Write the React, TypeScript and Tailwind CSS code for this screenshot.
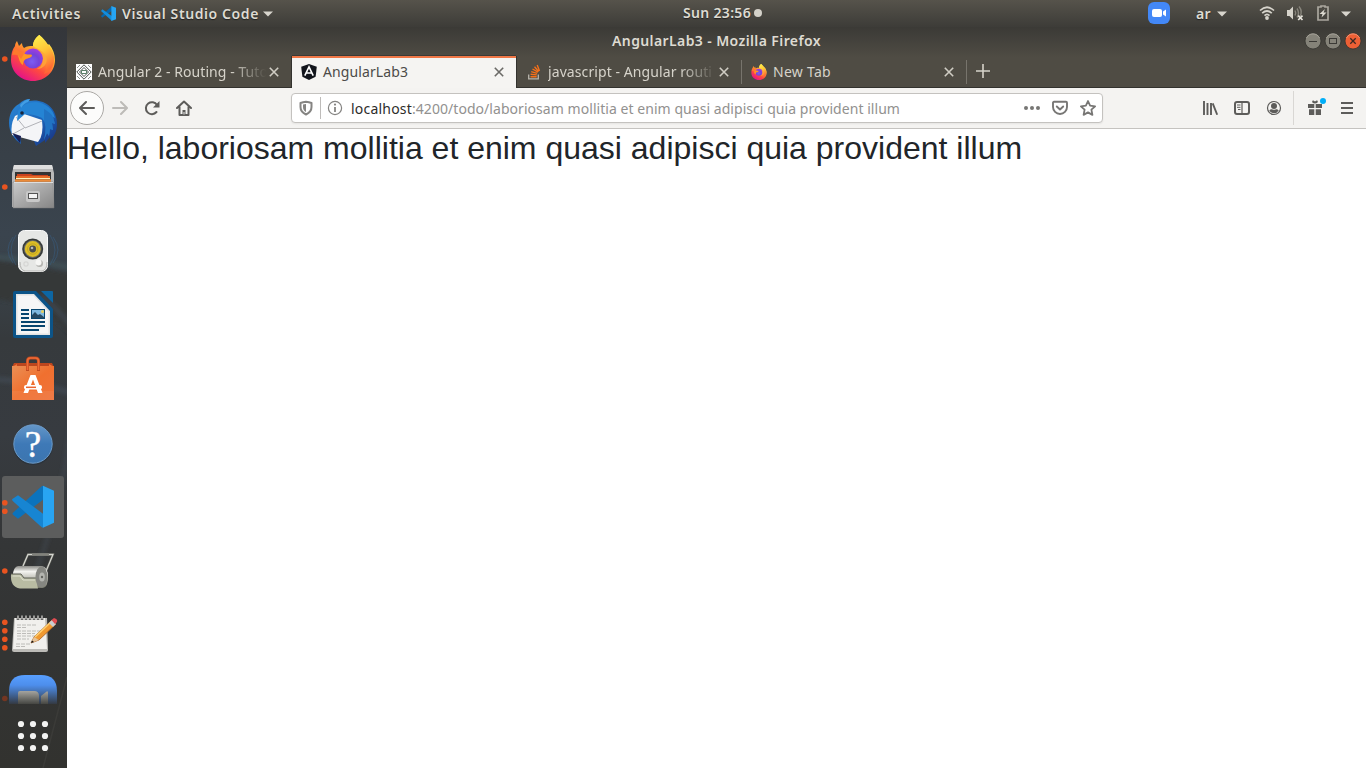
import { useLayoutEffect, useRef, useState } from "react";
import type { ReactNode } from "react";

/* Text tracked so that it fills an exact width. */
function Fit({ text, w, className = "" }: { text: string; w: number; className?: string }) {
  const ref = useRef<HTMLSpanElement>(null);
  const [ls, setLs] = useState(0);
  useLayoutEffect(() => {
    if (ref.current) setLs((w - ref.current.getBoundingClientRect().width) / text.length);
  }, [text, w]);
  return (
    <span ref={ref} className={`inline-block whitespace-pre ${className}`} style={{ letterSpacing: ls }}>
      {text}
    </span>
  );
}

function Caret() {
  return (
    <svg width="10" height="6" viewBox="0 0 10 6" className="shrink-0">
      <path d="M0 .5h10L5 5.5z" fill="#d8d5cd" />
    </svg>
  );
}

function VsCode({ size }: { size: number }) {
  return (
    <svg width={size} height={size} viewBox="0 0 42 42" className="shrink-0">
      <path d="M0 28 3 33 31 13V0z" fill="#0868ad" />
      <path d="M0 14 4 9 31 29v13z" fill="#148ddb" />
      <path d="M29 0 42 5v32l-13 5z" fill="#26a5f3" />
    </svg>
  );
}

function FirefoxArt({ id }: { id: string }) {
  return (
    <>
      <defs>
        <linearGradient id={id + "a"} x1=".85" y1=".1" x2=".3" y2="1">
          <stop offset="0" stopColor="#fff44f" />
          <stop offset=".35" stopColor="#ffa62b" />
          <stop offset=".65" stopColor="#ff4b3e" />
          <stop offset="1" stopColor="#e3108c" />
        </linearGradient>
        <radialGradient id={id + "b"} cx=".45" cy=".65" r=".65">
          <stop offset="0" stopColor="#7c5df2" />
          <stop offset=".55" stopColor="#7443d8" />
          <stop offset="1" stopColor="#a33ce0" />
        </radialGradient>
        <linearGradient id={id + "c"} x1="0" y1="0" x2=".3" y2="1">
          <stop offset="0" stopColor="#fff44f" />
          <stop offset=".5" stopColor="#ffc637" />
          <stop offset="1" stopColor="#ff6a35" />
        </linearGradient>
      </defs>
      <path
        d="M39.500 8C43 11 46 14 48 18l1-1c4 5 6 10 6 16 0 12-10 21-22 21S11 45 11 33c0-6 1-10 4-14 0-2 1-4 2-5l2 5 3-3c0 2 1 4 2 5 3-2 6-2 9-2 0-4 2-8 6-11z"
        fill={`url(#${id}a)`}
      />
      <path d="M39.500 8C42 14 52 17 54 30c1 10-5 15-10 17 4-6 4-15-1-21-3-4-7-5-10-7 0-4 2-8 6.500-11z" fill={`url(#${id}c)`} />
      <circle cx="33" cy="31.500" r="10" fill={`url(#${id}b)`} />
      <path d="M17 26c4-2 7 0 8 1 3 1 6 0 7 1 0 3-4 3-6 4-2 1-3 3-3 6-4-2-4-8-6-12z" fill="#ff9724" />
      <path d="M15 20c2 4 6 4 9 7l-3 5c-2-4-4-5-9-4z" fill="#ff7a2c" />
      <path d="M38 23c4 3 6 7 4.500 12-1 4-3 6-6 7 7 0 11-5 10-11-1-4-4-7-8.500-8z" fill="#ffa73a" opacity=".8" />
    </>
  );
}

function Firefox16() {
  return (
    <svg width="16" height="16" viewBox="10 8 46 46" className="shrink-0">
      <FirefoxArt id="fx16" />
    </svg>
  );
}

function Slot({ dots = 0, active = false, children }: { dots?: number; active?: boolean; children: ReactNode }) {
  const pos = [[], [32], [27.7, 36.3], [], [19.3, 27.7, 36.3, 44.700]][dots];
  return (
    <svg width="67" height="64" viewBox="0 0 67 64" className="block shrink-0">
      {active && <rect x="2" y="1" width="62" height="62" rx="3" fill="#5c5d5d" />}
      {children}
      {pos.map((y) => (
        <circle key={y} cx="4.800" cy={y} r="2.800" fill="#e95420" />
      ))}
    </svg>
  );
}

function Dock() {
  return (
    <nav className="relative flex h-[741px] w-[67px] shrink-0 flex-col overflow-hidden">
      <svg width="67" height="741" className="absolute top-0 left-0">
        <defs>
          <linearGradient id="wall" x1="0" y1="0" x2="0" y2="1">
            <stop offset="0" stopColor="#34363a" />
            <stop offset=".12" stopColor="#373e45" />
            <stop offset=".28" stopColor="#3a444e" />
            <stop offset=".34" stopColor="#394249" />
            <stop offset=".42" stopColor="#363a3d" />
            <stop offset=".55" stopColor="#373b40" />
            <stop offset=".7" stopColor="#343637" />
            <stop offset="1" stopColor="#32322f" />
          </linearGradient>
          <filter id="soft" x="-20%" y="-20%" width="140%" height="140%">
            <feGaussianBlur stdDeviation="2" />
          </filter>
        </defs>
        <rect width="67" height="741" fill="url(#wall)" />
        <g filter="url(#soft)">
          <path d="M-5 233 72 246v62Q40 276-5 272z" fill="#343738" />
          <path d="M-5 230Q35 232 72 241" fill="none" stroke="#4a6063" strokeWidth="3" opacity=".6" />
          <path d="M40 268Q56 280 72 300M-5 352Q35 355 72 366" fill="none" stroke="#4b5766" strokeWidth="5" opacity=".45" />
          <path d="M72 386Q66 470 30 560" fill="none" stroke="#4b5560" strokeWidth="4" opacity=".35" />
        </g>
        <path d="M67 650 43 741" stroke="#3b3b38" strokeWidth="1.500" />
      </svg>
      <div className="relative flex flex-col">
        <Slot dots={1}>
          <FirefoxArt id="fxd" />
        </Slot>
        <Slot>
          <defs>
            <linearGradient id="tb" x1="0" y1="0" x2="1" y2="1">
              <stop offset="0" stopColor="#2b8ad8" />
              <stop offset=".6" stopColor="#1b5fb4" />
              <stop offset="1" stopColor="#192a78" />
            </linearGradient>
          </defs>
          <path d="M19 13Q24 8 30 8l-1 2C43 7 57 16 57 33c0 6-2 12-7 16v-3l-5 6v-3l-9 6-2-5-14-5 1 8c-7-5-12-12-12-21 0-9 4-16 10-19z" fill="url(#tb)" />
          <path d="M15 25 21 22 42 29Q44 44 38 51L12 44Q10 34 15 25z" fill="#f4f5f7" />
          <path d="m16 26 9 11 17-7M24 37l-11 6" fill="none" stroke="#a9aab0" strokeWidth=".9" />
          <path d="M18 20q6-9 18-9c10 1 17 7 19 16l-2-1 2 7-3-1 1 7-3-1-1 7-2-3-3 7q4-16-2-22-8-4-17-4l-8 7z" fill="#2584d4" />
          <path d="M44 30q4 8 0 19l3-7 2 3 1-7 3 1-1-7 3 1-2-7q-3-5-9-8z" fill="#1f68b8" opacity=".6" />
          <path d="M20 14q5-6 10-6l-2 3q-4 1-7 6z" fill="#429ee4" />
          <circle cx="22" cy="22" r="1.800" fill="#17243a" />
          <path d="m12 42 9 3-1 7z" fill="#171f55" />
        </Slot>
        <Slot dots={1}>
          <defs>
            <linearGradient id="cab" x1="0" y1="0" x2="1" y2="1">
              <stop offset="0" stopColor="#cacaca" />
              <stop offset="1" stopColor="#858585" />
            </linearGradient>
          </defs>
          <path d="M14 10h38l2 8v34H12V18z" fill="#b9b9b9" />
          <path d="M14 10h38l1 4H13z" fill="#dedede" />
          <rect x="15" y="17" width="36" height="12" fill="#343434" />
          <path d="M17 19h14l2 1h15v3H17z" fill="#ca421e" />
          <rect x="16" y="21" width="34" height="2" fill="#e66c27" />
          <rect x="16" y="23" width="34" height="1.300" fill="#fff0b8" />
          <rect x="15" y="24.300" width="36" height="3" fill="#eb8b3a" />
          <path d="M13 27h40l1 26H13z" fill="url(#cab)" stroke="#777" strokeWidth=".5" />
          <path d="M14 27.500h39" stroke="#dedede" />
          <rect x="26" y="36" width="14" height="11" rx="2" fill="#c8c8c8" />
          <rect x="28.500" y="38.500" width="9" height="5" fill="#f4f4f4" stroke="#555" />
        </Slot>
        <Slot>
          <path d="M16 16Q6 31 16 46M13 18Q3 31 13 44M50 16Q60 31 50 46M53 18Q63 31 53 44" stroke="#376490" fill="none" opacity=".45" />
          <rect x="18.500" y="11.500" width="29" height="41" rx="6" fill="#e6e7e5" stroke="#fafafa" />
          <path d="M20 43q0 8 5 9h17q5-1 5-9" fill="none" stroke="#b5b5b2" />
          <circle cx="32.700" cy="30" r="10.500" fill="#363a39" />
          <circle cx="32.700" cy="30" r="8.900" fill="#686967" />
          <circle cx="32.700" cy="30" r="7.900" fill="#dcbd26" />
          <circle cx="32.700" cy="30" r="5.200" fill="none" stroke="#b89b1e" strokeWidth=".7" />
          <circle cx="32.700" cy="30" r="3.400" fill="#4b4d4c" />
          <circle cx="32" cy="29" r="1.300" fill="#b9bbba" />
          <circle cx="39.500" cy="44.500" r="3.500" fill="#b4b4b0" />
          <circle cx="38.500" cy="43.500" r="3" fill="#f6f6f4" />
          <rect x="24" y="43" width="4" height="4" rx="1" fill="none" stroke="#d1d1cf" />
        </Slot>
        <Slot>
          <path d="M15 8h21l17 18v27q0 2-2 2H15q-2 0-2-2V10q0-2 2-2z" fill="#0c5488" />
          <path d="M41 8h11q1 0 1 1v11z" fill="#0d66a3" />
          <path d="M16 11h18l16 17v24H16z" fill="#e3e3e3" />
          <path d="M17.500 12.500h16L48.500 29v21.500h-31z" fill="#f6f6f6" />
          <path d="M21 27h8M21 31h8M21 35h8M21 39h24M21 43h24M21 47h18" stroke="#08466f" strokeWidth="1.800" />
          <rect x="31" y="26" width="14" height="10" fill="#08466f" />
          <rect x="32" y="27" width="12" height="8" fill="#7fb8df" />
          <circle cx="42.500" cy="28.500" r="1.500" fill="#e8cf5a" />
          <path d="m32 35v-3l3-3 3 3 2-1 4 3v1z" fill="#274961" />
        </Slot>
        <Slot>
          <defs>
            <linearGradient id="bag" x1="0" y1="0" x2="1" y2="1">
              <stop offset="0" stopColor="#ea8f55" />
              <stop offset=".5" stopColor="#f0702f" />
              <stop offset="1" stopColor="#f0733c" />
            </linearGradient>
          </defs>
          <path d="M14 16h38l2 4H12z" fill="#bc461e" />
          <path d="M12 20l5-3v3zM54 20l-5-3v3z" fill="#f17436" />
          <path d="M12 19h42v34H12z" fill="url(#bag)" />
          <path d="M12 44h42v9H12z" fill="#fff" opacity=".06" />
          <path d="M27.500 24V14q0-3 3-3h5q3 0 3 3v10" fill="none" stroke="#c14b20" strokeWidth="3" />
          <path d="M27.500 23V14q0-3 3-3h5q3 0 3 3v9" fill="none" stroke="#ef6a35" strokeWidth="1.700" />
          <path d="M30.500 28h5l7 18h-4.500l-5-13.500-5 13.500h-4.500z" fill="#fff" />
          <rect x="24" y="38" width="18" height="4.600" rx="2" fill="#fff" />
          <path d="M26 40.300h10" stroke="#ea6630" strokeWidth="1.500" />
        </Slot>
        <Slot>
          <defs>
            <linearGradient id="help" x1="0" y1="0" x2="0" y2="1">
              <stop offset="0" stopColor="#6496c8" />
              <stop offset=".5" stopColor="#3e79b7" />
              <stop offset="1" stopColor="#3c75af" />
            </linearGradient>
          </defs>
          <ellipse cx="33" cy="34.500" rx="20" ry="19.500" fill="#202b37" opacity=".5" />
          <circle cx="33" cy="33" r="19.200" fill="url(#help)" stroke="#6d9bc8" />
          <text x="33" y="45.500" textAnchor="middle" fontFamily="Liberation Serif, serif" fontSize="37" fill="#fff" stroke="#fff" strokeWidth=".4">?</text>
        </Slot>
        <Slot dots={2} active>
          <g transform="translate(12 10.700)">
            <path d="M1 27 28 2q2-2 3-2v14L6 33 1 29q-1-1 0-2z" fill="#0b73bd" />
            <path d="M0 13.500 6 9.500 31 28v14q-1 0-3-2L1 15.500q-1-1-1-2z" fill="#1785d2" />
            <path d="M31 0 42 5v32l-11 5z" fill="#28a4f2" />
          </g>
        </Slot>
        <Slot dots={1}>
          <defs>
            <linearGradient id="roll" x1="0" y1="0" x2="0" y2="1">
              <stop offset="0" stopColor="#8b8b87" />
              <stop offset=".25" stopColor="#f3f3ef" />
              <stop offset=".6" stopColor="#babab0" />
              <stop offset="1" stopColor="#737568" />
            </linearGradient>
          </defs>
          <path d="M23 27 28 15.500H53L44 37" fill="none" stroke="#555651" strokeWidth="2.400" />
          <path d="M23 27 28 15.500H53L44 37" fill="none" stroke="#d4d5cf" strokeWidth="1.300" />
          <path d="M32 15.500h17" stroke="#81827c" strokeWidth="2.300" />
          <path d="M18 27h24q6 1 6 11 0 10-5 11H21Q12 44 13 34q1-6 5-7z" fill="url(#roll)" />
          <path d="M11 35h10l3 4h12q1 7 2 10.500H20Q10 48 11 35z" fill="#b9bca3" />
          <path d="M11 35h10l3 4h12" fill="none" stroke="#5e6056" />
          <path d="M12.500 37H20l3 4h12" fill="none" stroke="#dfe0cf" />
          <ellipse cx="41.500" cy="38" rx="6" ry="10.500" fill="#858681" />
          <ellipse cx="42" cy="38" rx="2.800" ry="4.500" fill="#b4b5b0" />
          <circle cx="42" cy="38" r="1.200" fill="#62635f" />
        </Slot>
        <Slot dots={4}>
          <path d="M14 15h33l1 32q0 2-2 2H14q-2 0-2-2z" fill="#bcbbb7" />
          <path d="M15 15h30l2 31H13z" fill="#f1f0ed" />
          <path d="M18 13v4M22 13v4M26 13v4M30 13v4M34 13v4M38 13v4M42 13v4" stroke="#333" strokeWidth="2.500" />
          <path d="M18 12.500v4M22 12.500v4M26 12.500v4M30 12.500v4M34 12.500v4M38 12.500v4M42 12.500v4" stroke="#deddd9" strokeWidth="1.200" />
          <path d="M17 22h20M17 24.500h9M17 28h24M17 30.500h18M17 33h20M17 36h12M16 41h14M16 43.500h10" stroke="#b0afab" strokeWidth=".8" strokeDasharray="4 1" />
          <path d="m31 40 3-6 18-17 4 4-17 16z" fill="#f09930" stroke="#a85d22" strokeWidth=".8" />
          <path d="m35 34 17-16" stroke="#ffd171" strokeWidth="1.500" />
          <path d="m31 40 3-6 5 3z" fill="#e6c49a" />
          <path d="m31 40 1-2.500 2 1.500z" fill="#111" />
          <path d="m49 20 3-3 4 4-3 3z" fill="#c8cdd0" />
          <path d="M51.500 17 54 15q4 1 3 4l-2 2z" fill="#e04c51" />
        </Slot>
      </div>
      <svg width="67" height="37" viewBox="0 0 67 37" className="relative block shrink-0">
        <defs>
          <linearGradient id="zf" x1="0" y1="0" x2="0" y2="1">
            <stop offset="0" stopColor="#589fff" />
            <stop offset=".35" stopColor="#4d8eec" />
            <stop offset="1" stopColor="#343a43" />
          </linearGradient>
          <linearGradient id="zc" x1="0" y1="0" x2="0" y2="1">
            <stop offset="0" stopColor="#a5a49f" />
            <stop offset="1" stopColor="#454642" />
          </linearGradient>
        </defs>
        <path d="M9 37V24Q9 8 25 8h16q16 0 16 16v13z" fill="url(#zf)" />
        <path d="M18 37V26q0-2 2-2h14q5 0 5 5v8z" fill="url(#zc)" />
        <path d="M41 37V29l5-4q2-2 2 1v11z" fill="url(#zc)" />
        <circle cx="4.800" cy="31.500" r="2.800" fill="#743622" />
      </svg>
      <svg width="67" height="64" viewBox="0 0 67 64" className="relative block shrink-0">
        {[20, 32, 44].map((y) => [21, 33, 45].map((x) => <circle key={`${x}-${y}`} cx={x} cy={y} r="3.100" fill="#f3f3f2" />))}
      </svg>
    </nav>
  );
}

function Close({ color }: { color: string }) {
  return (
    <svg width="10" height="10" viewBox="0 0 10 10" className="shrink-0">
      <path d="m.8.8 8.400 8.400M9.200.8.8 9.200" stroke={color} strokeWidth="1.600" />
    </svg>
  );
}

function Tab({ icon, title, w, active = false, fade = false, line = false }: { icon: ReactNode; title: string; w: number; active?: boolean; fade?: boolean; line?: boolean }) {
  return (
    <div
      className={`relative flex h-[32px] w-[225px] shrink-0 items-center pl-[9px] ${
        active ? "z-10" : "text-[#d6d3ca]"
      }`}
    >
      {active && (
        <div className="absolute inset-y-0 right-px left-0 border-t-2 border-[#f07746] bg-[#f5f4f2] shadow-[-1px_0_0_#33322e,1px_0_0_#33322e,0_-1px_0_#3b3a36]" />
      )}
      <div className={`relative flex items-center ${active ? "text-[#4c4b48]" : ""}`}>
        {icon}
        <div className={`mb-px ml-[6px] w-[170px] ${fade ? "[mask-image:linear-gradient(to_right,black_78%,transparent_99%)]" : ""}`}>
          <Fit text={title} w={w} className="align-top" />
        </div>
        <div className="ml-px flex">
          <Close color={active ? "#6b6a67" : "#d0cdc4"} />
        </div>
      </div>
      {line && <div className="absolute top-[4px] right-0 h-[24px] w-px bg-[#77746c]" />}
    </div>
  );
}

function Tool({ children }: { children: ReactNode }) {
  return (
    <div className="flex w-8 shrink-0 justify-center">
      <svg width="16" height="16" viewBox="0 0 16 16" fill="none" stroke="#5d5c5a" strokeWidth="2">
        {children}
      </svg>
    </div>
  );
}

function Toolbar() {
  return (
    <div className="flex h-[41px] items-center border-b border-[#c5c3c0] bg-[#f4f3f1] pl-[3px]">
      <div className="flex size-[34px] shrink-0 items-center justify-center rounded-full border border-[#aaa8a5] bg-[#fcfcfb]">
        <svg width="16" height="16" viewBox="0 0 16 16" fill="none" stroke="#5d5c5a" strokeWidth="2" strokeLinecap="round" strokeLinejoin="round">
          <path d="M15 8H1.500M7 2 1 8l6 6" />
        </svg>
      </div>
      <Tool>
        <path d="M1 8h13.500M9 2l6 6-6 6" stroke="#bdbbb8" strokeLinecap="round" strokeLinejoin="round" />
      </Tool>
      <Tool>
        <path d="M12.500 12A6 6 0 1 1 13 5" strokeLinecap="round" />
        <path d="M15.500 1v6.500H9z" fill="#5d5c5a" stroke="none" />
      </Tool>
      <Tool>
        <path d="m1 8 7-6.500L15 8M3.500 7v8h9V7" strokeLinecap="round" strokeLinejoin="round" />
        <path d="M6.500 15v-5h3v5z" fill="#5d5c5a" stroke="none" />
        <path d="M8 12v2.500" stroke="#eee" strokeWidth="1" />
      </Tool>
      <div className="ml-[91px] flex h-[30px] w-[812px] shrink-0 items-center rounded-[4px] border border-[#c4c2bf] bg-white pl-[6px] text-[#92918f] shadow-[0_1px_2px_#00000010]">
        <svg width="16" height="16" viewBox="0 0 16 16" fill="none" stroke="#858482" strokeWidth="2">
          <path d="M8 1.700Q11 2 13.500 3v4q0 5-5.500 7.500Q2.500 12 2.500 7V3Q5 2 8 1.700z" strokeLinejoin="round" />
          <path d="M8 4v8Q5 10.500 5 7V4.500z" fill="#858482" stroke="none" />
        </svg>
        <div className="ml-[6px] h-[22px] w-px bg-[#bebcba]" />
        <svg width="16" height="16" viewBox="0 0 16 16" className="ml-[6px]">
          <circle cx="8" cy="8" r="6.600" fill="none" stroke="#858482" strokeWidth="1.200" />
          <path d="M8 7v5" stroke="#858482" strokeWidth="1.800" />
          <circle cx="8" cy="4.600" r="1.100" fill="#858482" />
        </svg>
        <div className="mt-[2px] ml-[8px] flex w-[665px]">
          <Fit text="localhost" w={61} className="text-[#2d2c2a]" />
          <Fit text=":4200/todo/laboriosam mollitia et enim quasi adipisci quia provident illum" w={488} />
        </div>
        <svg width="16" height="16" viewBox="0 0 16 16" fill="#777674" className="ml-[8px]">
          <circle cx="2" cy="8" r="2" />
          <circle cx="8" cy="8" r="2" />
          <circle cx="14" cy="8" r="2" />
        </svg>
        <svg width="16" height="16" viewBox="0 0 16 16" fill="none" stroke="#777674" strokeWidth="1.900" strokeLinecap="round" strokeLinejoin="round" className="ml-[12px]">
          <path d="M2 1.800h12q1 0 1 1V7A7 7 0 0 1 1 7V2.800q0-1 1-1z" />
          <path d="m4.800 6.500 3.200 3 3.200-3" />
        </svg>
        <svg width="16" height="16" viewBox="0 0 16 16" fill="none" stroke="#777674" strokeWidth="1.800" strokeLinejoin="round" className="ml-[12px]">
          <path d="m8 1 2.100 4.700 5 .6-3.700 3.400 1 5.200L8 12.400l-4.400 2.500 1-5.200L.9 6.300l5-.6z" />
        </svg>
      </div>
      <div className="ml-[91px] flex items-center">
        <Tool>
          <path d="M2 1v14M5.500 3v12M9 3v12M10.700 3.300 15.200 14.700" strokeWidth="1.900" />
        </Tool>
        <Tool>
          <rect x="1" y="2" width="14" height="12" rx="2" />
          <path d="M8 2v12" strokeWidth="1.200" />
          <path d="M3 5h3.500M3 7.300h3.500M4 9.500h2.500" strokeWidth="1" />
        </Tool>
        <Tool>
          <circle cx="8" cy="8" r="6.500" strokeWidth="1.200" />
          <circle cx="8" cy="6" r="3" fill="#5d5c5a" stroke="none" />
          <path d="M3.300 10.500Q4.500 9 6 9.300q2 1 4 0 1.500-.3 2.700 1.200Q11 13.300 8 13.300t-4.700-2.800z" fill="#5d5c5a" stroke="none" />
        </Tool>
        <div className="ml-[3px] h-[34px] w-px bg-[#d9d7d4]" />
        <div className="relative ml-[5px] flex">
          <Tool>
            <path d="M1 4h6.300v4H1zM8.700 4H15v4H8.700zM2 9.200h5.300V15H2zM8.700 9.200H14V15H8.700z" fill="#5d5c5a" stroke="none" />
            <path d="M8 3.500C4 3 5 0 6.500.500L8 1.500 9.500.500C11 0 12 3 8 3.500z" fill="#5d5c5a" stroke="none" />
          </Tool>
          <div className="absolute top-[-2px] right-[5px] size-[6px] rounded-full bg-[#00aef8]" />
        </div>
        <Tool>
          <path d="M2 3h12M2 8h12M2 13h12" />
        </Tool>
      </div>
    </div>
  );
}

function WindowButton({ kind }: { kind: "min" | "max" | "close" }) {
  return (
    <svg width="18" height="18" viewBox="0 0 18 18">
      <circle cx="9" cy="9" r="8" fill={kind === "close" ? "#ed6035" : "#858379"} stroke="#34332f" strokeWidth=".8" />
      <path d="M2.500 6A7.200 7.200 0 0 1 15.500 6" fill="none" stroke={kind === "close" ? "#f49170" : "#a5a298"} />
      {kind === "min" && <path d="M5 9.500h8" stroke="#3b3a36" />}
      {kind === "max" && <rect x="5.500" y="6.500" width="7" height="5" fill="none" stroke="#3b3a36" />}
      {kind === "close" && <path d="m6.300 6.300 5.400 5.400m0-5.400-5.400 5.400" stroke="#3b2822" strokeWidth="1.300" />}
    </svg>
  );
}

function TopBar() {
  return (
    <header className="flex h-[27px] items-center bg-linear-to-b from-[#56534b] to-[#3d3c38] font-semibold text-[#dedbd2] [text-shadow:0_1px_1px_#00000080]">
      <div className="flex w-[683px] items-center pl-[12px]">
        <Fit text="Activities" w={69} />
        <div className="ml-[20px] flex">
          <VsCode size={15} />
        </div>
        <Fit text="Visual Studio Code" w={137} className="ml-[6px]" />
        <div className="ml-[4px] flex">
          <Caret />
        </div>
      </div>
      <Fit text="Sun 23:56" w={68} className="h-[21px]" />
      <div className="mb-px ml-[3px] size-[8px] rounded-full bg-[#d4d1c9]" />
      <svg width="22" height="22" viewBox="0 0 22 22" className="mb-px ml-[386px] shrink-0">
        <rect width="22" height="22" rx="6" fill="#4388f7" />
        <rect x="4" y="7" width="10" height="8" rx="2" fill="#fff" />
        <path d="m15 9.500 3-2v7l-3-2z" fill="#fff" />
      </svg>
      <div className="ml-[26px] flex items-center">
        <Fit text="ar" w={15} />
        <div className="ml-[6px] flex">
          <Caret />
        </div>
      </div>
      <svg width="16" height="16" viewBox="0 0 16 16" className="mb-px ml-[32px] shrink-0" fill="none" stroke="#d6d3cb" strokeWidth="1.700">
        <path d="M1 5.500Q8-1 15 5.500M3.200 8.200Q8 3.800 12.800 8.200M5.500 10.700Q8 8.200 10.500 10.700" />
        <circle cx="8" cy="13" r="1.900" fill="#d6d3cb" stroke="none" />
      </svg>
      <svg width="18" height="16" viewBox="0 0 18 16" className="mb-px ml-[11px] shrink-0" fill="none">
        <path d="M1 5h2.500L7 1.500v13L3.500 11H1z" fill="#d6d3cb" />
        <path d="M9 5.500q1.500 2.500 0 5M11 3.500q3 4.500 0 9M13 1.500q4 5 1 9.500" stroke="#87847b" strokeWidth="1.400" />
        <path d="m12.200 10.700 4.300 4.300m0-4.300L12.200 15" stroke="#e7e4dc" strokeWidth="1.700" />
      </svg>
      <svg width="12" height="16" viewBox="0 0 12 16" className="mb-px ml-[13px] shrink-0">
        <path d="M4 2V1h4v1h3v13H1V2z" fill="none" stroke="#aaa79e" strokeWidth="1.700" />
        <path d="M8 4 2.500 9H5.500l-1 3.500L9.500 7.500H6.500z" fill="#dedbd2" />
      </svg>
      <div className="ml-[12px] flex">
        <Caret />
      </div>
    </header>
  );
}

export default function App() {
  return (
    <div className="flex h-[768px] w-[1366px] flex-col overflow-hidden bg-white font-['Noto_Sans',sans-serif] text-[14px] leading-[20px]">
      <TopBar />
      <div className="flex">
        <Dock />
        <main className="w-[1299px]">
          <div className="flex h-[61px] flex-col bg-linear-to-b from-[#3b3a36] via-[#4f4c44] via-50% to-[#4f4c44] shadow-[inset_0_-1px_0_#33322e]">
            <div className="flex h-[29px] shrink-0 items-center pb-[2px] text-[#dedbd2]">
              <Fit text="AngularLab3 - Mozilla Firefox" w={209} className="ml-[545px] font-semibold" />
              <div className="ml-auto flex gap-[2px] pr-[4px]">
                <WindowButton kind="min" />
                <WindowButton kind="max" />
                <WindowButton kind="close" />
              </div>
            </div>
            <div className="flex h-[32px] shrink-0 items-center">
              <Tab
                fade
                title="Angular 2 - Routing - Tuto"
                w={170}
                icon={
                  <svg width="16" height="16" viewBox="0 0 16 16" className="shrink-0" fill="none" stroke="#4a4f4c">
                    <path fill="#fff" stroke="none" d="M0 0h16v16H0z" />
                    <path d="m8 .8 7.200 7.200L8 15.200.8 8zM8 3.500 12.500 8 8 12.500 3.500 8z" />
                    <path d="M5.500 6.500h5v3h-5z" stroke="#5b8068" />
                    <path d="M1 4l3-3M12 1l3 3M1 12l3 3M12 15l3-3" stroke="#8b918d" />
                  </svg>
                }
              />
              <Tab
                active
                title="AngularLab3"
                w={85}
                icon={
                  <svg width="16" height="16" viewBox="0 0 16 16" className="shrink-0">
                    <path d="m8 0 7.800 2.700-1.200 10L8 16l-6.600-3.300L.2 2.700z" fill="#12151c" />
                    <path d="M3.800 11.700 8 2.800l4.200 8.900M5.500 9h5" fill="none" stroke="#fff" strokeWidth="1.600" />
                  </svg>
                }
              />
              <Tab
                fade
                line
                title="javascript - Angular routi"
                w={164}
                icon={
                  <svg width="16" height="16" viewBox="0 0 16 16" className="shrink-0" fill="none">
                    <path d="M2.700 10.500v4.300h9.600v-4.300" stroke="#b8b5ac" strokeWidth="1.300" />
                    <path d="M4.500 12.700h6.200M4.600 10.300l6.200.6M5.200 7.700l6 1.700M6.500 5l5.500 3.200M8.500 2.700l4.200 4.800M11.200 1l2.300 6" stroke="#f4701a" strokeWidth="1.400" />
                  </svg>
                }
              />
              <Tab line title="New Tab" w={58} icon={<Firefox16 />} />
              <svg width="14" height="14" viewBox="0 0 14 14" className="mb-[2px] ml-[9px]">
                <path d="M7 0v14M0 7h14" stroke="#d6d3ca" strokeWidth="1.600" />
              </svg>
            </div>
          </div>
          <Toolbar />
          <p className="font-['Liberation_Sans',Arial,sans-serif] text-[32px] leading-[38px] text-[#212529]">
            Hello, laboriosam mollitia et enim quasi adipisci quia provident illum
          </p>
        </main>
      </div>
    </div>
  );
}
